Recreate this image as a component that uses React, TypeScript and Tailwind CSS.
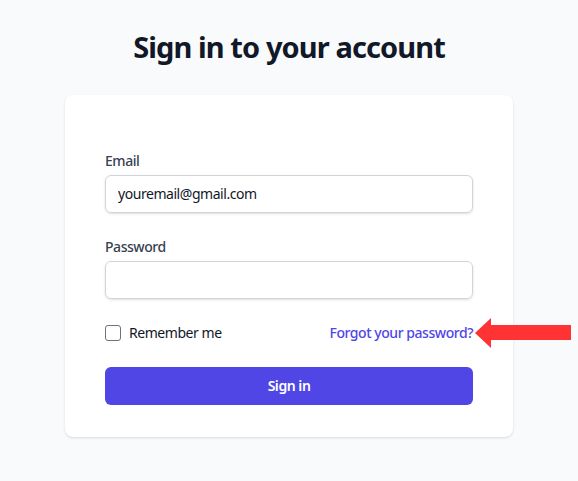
import React from 'react';

const ArrowPointer: React.FC = () => (
  <svg
    className="absolute left-[calc(100%+2px)] top-1/2 -translate-y-1/2"
    width="96"
    height="30"
    viewBox="0 0 96 30"
  >
    <path d="M0 15 L16 0 L16 7 L96 7 L96 22 L16 22 L16 30 Z" fill="#ff3333" />
  </svg>
);

export default function App() {
  return (
    <div className="min-h-[481px] bg-[#f9fafb] font-['Noto_Sans',sans-serif] pt-[29px]">
      <h2 className="text-center text-[29px] leading-9 font-bold text-[#111827] tracking-[-0.9px]">
        Sign in to your account
      </h2>

      <div className="mx-auto mt-[30px] w-[448px] bg-white rounded-lg shadow-sm px-10 pt-14 pb-8">
        <form className="space-y-6 tracking-[-0.45px]" onSubmit={(e) => e.preventDefault()}>
          <div>
            <label className="block text-sm font-medium text-[#374151]">Email</label>
            <input
              type="email"
              defaultValue="youremail@gmail.com"
              className="mt-1 block w-full rounded-md border border-[#d1d5db] px-3 py-2 text-sm leading-5 text-[#111827] tracking-[-0.45px] shadow-sm"
            />
          </div>

          <div>
            <label className="block text-sm font-medium text-[#374151]">Password</label>
            <input
              type="password"
              className="mt-1 block w-full rounded-md border border-[#d1d5db] px-3 py-2 text-sm leading-5 shadow-sm"
            />
          </div>

          <div className="relative flex items-center justify-between">
            <div className="flex items-center">
              <span className="h-4 w-4 rounded-[3px] border border-[#6b7280] bg-white" />
              <span className="ml-2 text-sm text-[#111827]">Remember me</span>
            </div>
            <a href="#" className="text-sm font-medium text-[#4f46e5]">
              Forgot your password?
            </a>
            <ArrowPointer />
          </div>

          <button
            type="submit"
            className="flex w-full justify-center rounded-md bg-[#4f46e5] px-4 py-2 text-sm leading-[22px] font-semibold text-white"
          >
            Sign in
          </button>
        </form>
      </div>
    </div>
  );
}
